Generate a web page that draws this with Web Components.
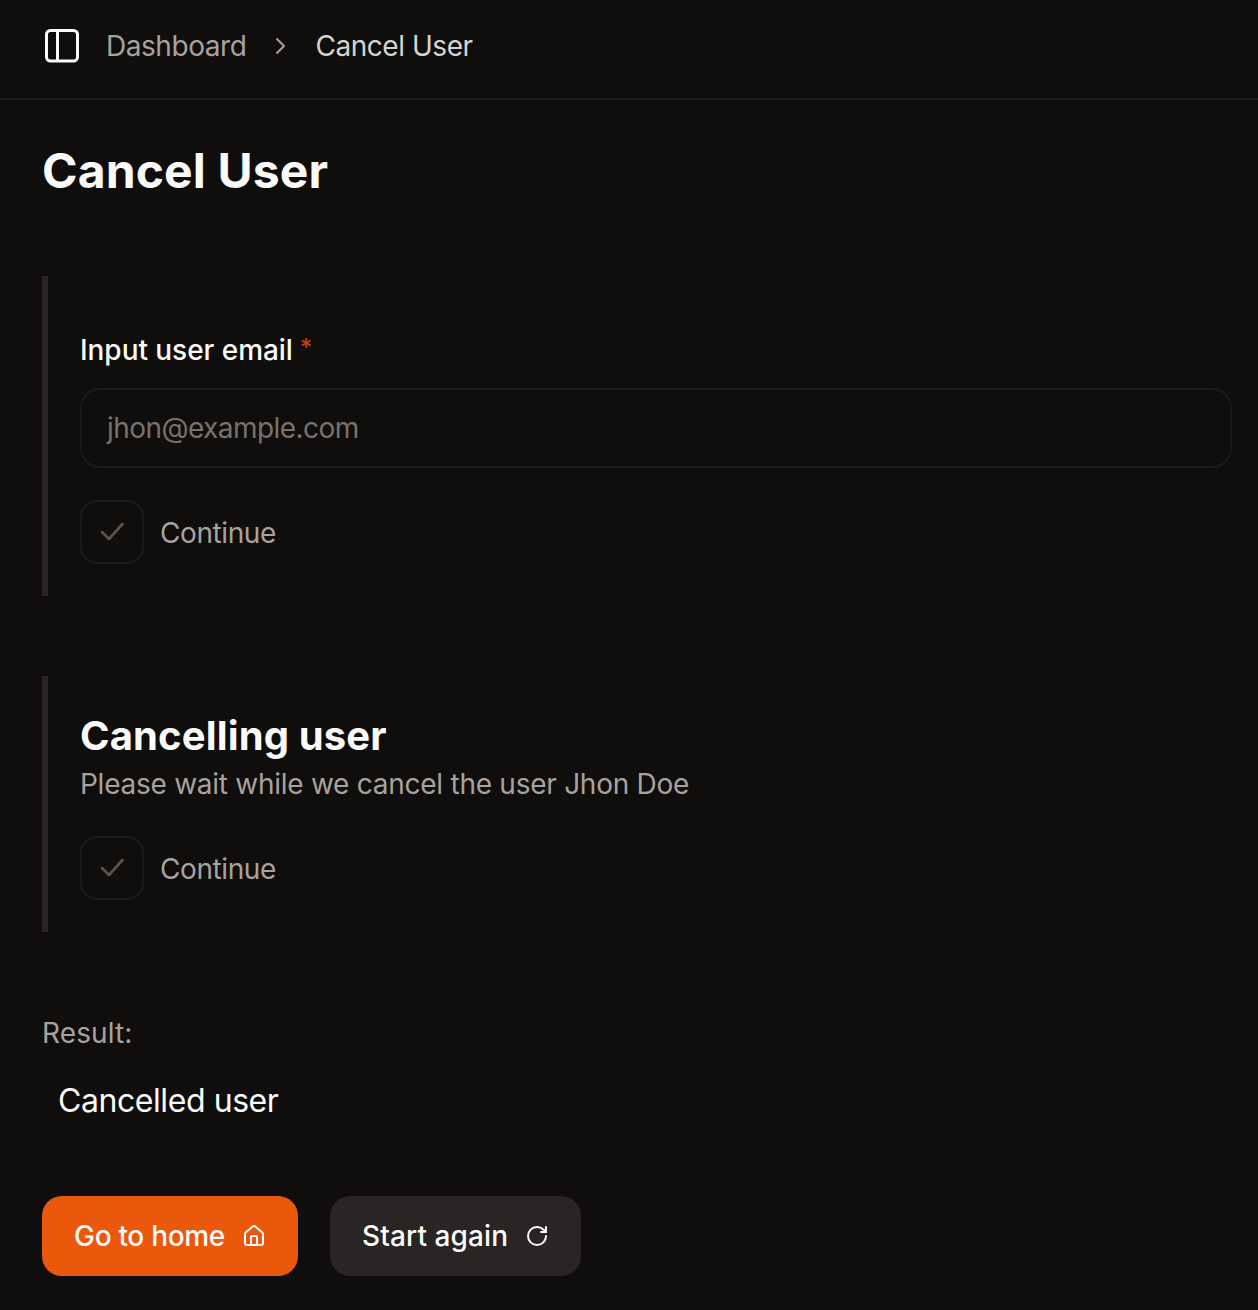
<!DOCTYPE html>
<html><head><meta charset="utf-8"><style>
html,body{margin:0;background:#0f0e0d;}
body{font-family:Inter,"Liberation Sans",sans-serif;color:#fafaf9;}
</style></head><body>
<template id="t-crumbs"><style>
:host{display:flex;align-items:center;border-bottom:2px solid #1c1a19;padding-left:44px;padding-bottom:6px;box-sizing:content-box;height:92px;font-size:28px;letter-spacing:-.45px}
svg{display:block}
.a{color:#a8a29e;margin-left:26px}
.s{margin:0 25px 0 26px;display:flex}
.b{color:#d6d3d1}
</style><svg width="36" height="36" viewBox="0 0 36 36" fill="none" stroke="#fafaf9" stroke-width="3" stroke-linejoin="round"><rect x="2.5" y="2.5" width="31" height="30.5" rx="4"/><path d="M13.5 2.5v30.5"/></svg><span class="a">Dashboard</span><span class="s"><svg width="18" height="18" viewBox="0 0 18 18" fill="none" stroke="#a8a29e" stroke-width="2" stroke-linecap="round" stroke-linejoin="round"><path d="M5 2l7 7-7 7"/></svg></span><span class="b">Cancel User</span></template>

<template id="t-step"><style>
:host{display:block;border-left:6px solid #292524;padding-left:32px;box-sizing:border-box}
</style><slot></slot></template>

<template id="t-continue"><style>
:host{display:flex;align-items:center;gap:16px;color:#a8a29e;font-size:28px;height:64px;letter-spacing:-.4px}
.box{width:60px;height:60px;border:2px solid #1c1a19;border-radius:16px;display:flex;align-items:center;justify-content:center}
.t{position:relative;top:1px}
svg{display:block}
</style><span class="box"><svg width="28" height="28" viewBox="0 0 28 28" fill="none" stroke="#57534e" stroke-width="2.8" stroke-linecap="round" stroke-linejoin="round"><path d="M4 14l7 7L24.5 6"/></svg></span><span class="t"><slot></slot></span></template>

<template id="t-field"><style>
:host{display:block}
label{display:block;font-size:28px;font-weight:500;color:#fafaf9;line-height:34px;letter-spacing:-.05px;padding-top:1px}
sup{color:#c2410c;font-size:24px;line-height:0;margin-left:7px;vertical-align:4px}
.in{margin-top:21px;height:76px;border:2px solid #1c1a19;border-radius:20px;display:flex;align-items:center;padding-left:25px;color:#78716c;font-size:28px;letter-spacing:-.55px}
</style><label><slot name="label"></slot><sup>*</sup></label><div class="in"><slot name="ph"></slot></div></template>

<template id="t-btn"><style>
:host{display:inline-flex;align-items:center;gap:17px;height:80px;padding:0 32px;border-radius:20px;font-size:28px;font-weight:500;color:#fafaf9;background:#292524;box-sizing:border-box;letter-spacing:.1px}
:host([primary]){background:#ea580c;letter-spacing:-.3px}
::slotted(svg){display:block}
</style><slot></slot></template>

<template id="t-page"><style>
:host{display:block;width:1258px;height:1310px;overflow:hidden}
main{padding:0 26px 0 42px;display:flex;flex-direction:column}
h1{margin:43px 0 0;font-size:48px;line-height:56px;font-weight:700;letter-spacing:.15px;color:#fafaf9}
.s1{margin-top:77px;height:320px;padding-top:56px}
.s1 x-continue{margin-top:32px}
.s2{margin-top:80px;height:256px;padding-top:34px}
h2{margin:0;font-size:40px;line-height:52px;font-weight:700;color:#fafaf9;letter-spacing:.13px}
p{margin:4px 0 0;font-size:28px;line-height:36px;color:#a8a29e;letter-spacing:-.26px}
.s2 x-continue{margin-top:34px}
.r{margin-top:83px;font-size:28px;line-height:36px;color:#a8a29e;letter-spacing:.1px}
.c{margin:28px 0 0 16px;font-size:32px;line-height:44px;color:#fafaf9;letter-spacing:-.43px}
.bt{display:flex;gap:32px;margin-top:73px}
</style><x-crumbs></x-crumbs><main><h1>Cancel User</h1>
<x-step class="s1"><x-field><span slot="label">Input user email</span><span slot="ph">jhon@example.com</span></x-field><x-continue>Continue</x-continue></x-step>
<x-step class="s2"><h2>Cancelling user</h2><p>Please wait while we cancel the user Jhon Doe</p><x-continue>Continue</x-continue></x-step>
<div class="r">Result:</div><div class="c">Cancelled user</div>
<div class="bt"><x-btn primary>Go to home<svg width="24" height="24" viewBox="0 0 24 24" fill="none" stroke="#fafaf9" stroke-width="2" stroke-linecap="round" stroke-linejoin="round"><path d="M15 21v-8a1 1 0 0 0-1-1h-4a1 1 0 0 0-1 1v8"/><path d="M3 10a2 2 0 0 1 .7-1.5l7-6a2 2 0 0 1 2.6 0l7 6a2 2 0 0 1 .7 1.5v9a2 2 0 0 1-2 2H5a2 2 0 0 1-2-2z"/></svg></x-btn><x-btn>Start again<svg width="24" height="24" viewBox="0 0 24 24" fill="none" stroke="#fafaf9" stroke-width="2" stroke-linecap="round" stroke-linejoin="round"><path d="M21 12a9 9 0 1 1-9-9c2.5 0 4.9 1 6.7 2.7L21 8"/><path d="M21 3v5h-5"/></svg></x-btn></div></main></template>
<x-page></x-page>
<script>
for (const n of ['crumbs','step','continue','field','btn','page']) {
  customElements.define('x-'+n, class extends HTMLElement {
    constructor(){super();this.attachShadow({mode:'open'}).appendChild(document.getElementById('t-'+n).content.cloneNode(true));}
  });
}
</script></body></html>
